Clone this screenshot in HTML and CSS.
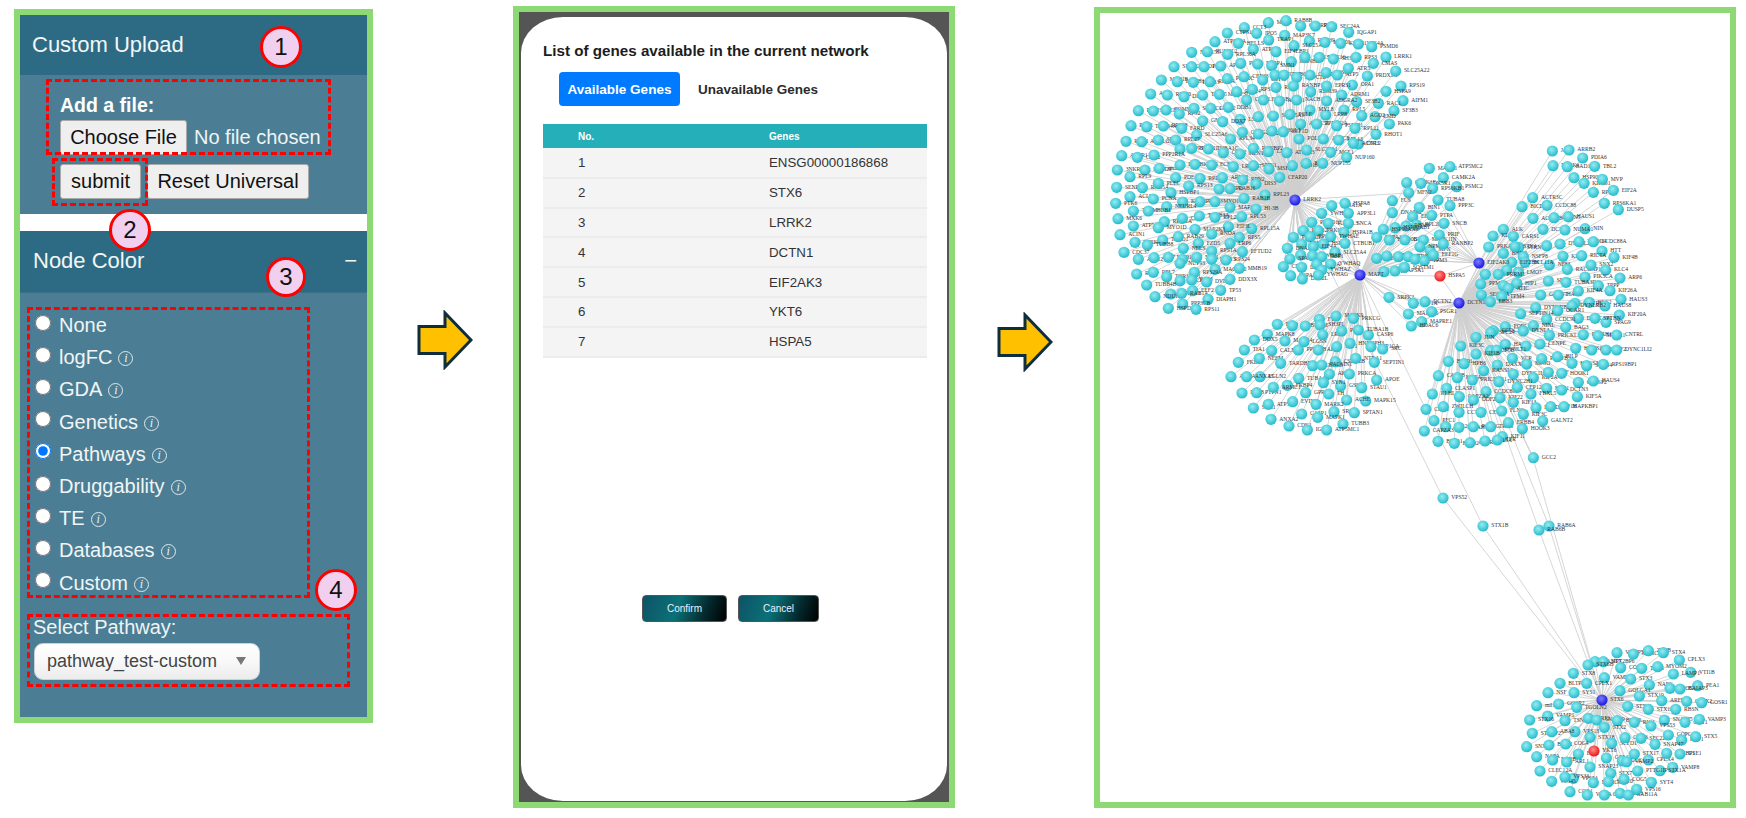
FILE: index.html
```html
<!DOCTYPE html>
<html lang="en">
<head>
<meta charset="utf-8">
<title>Custom upload workflow</title>
<link rel="stylesheet" href="styles.css">
</head>
<body>
<main class="figure">
  <section class="panel panel-upload">
    <h2 class="acc-head">Custom Upload</h2>
    <div class="acc-body upload-body">
      <div class="file-label">Add a file:</div>
      <div class="file-row"><button class="ui-btn choose-btn" type="button">Choose File</button><span class="file-status">No file chosen</span></div>
      <div class="btn-row"><button class="ui-btn submit-btn" type="button">submit</button><button class="ui-btn reset-btn" type="button">Reset Universal</button></div>
    </div>
    <div class="acc-gap"></div>
    <h2 class="acc-head node-head">Node Color<span class="collapse">−</span></h2>
    <div class="acc-body color-body">
      <label class="radio-row"><input type="radio" name="c"><span>None</span></label>
      <label class="radio-row"><input type="radio" name="c"><span>logFC</span><i class="info">i</i></label>
      <label class="radio-row"><input type="radio" name="c"><span>GDA</span><i class="info">i</i></label>
      <label class="radio-row"><input type="radio" name="c"><span>Genetics</span><i class="info">i</i></label>
      <label class="radio-row"><input type="radio" name="c" checked><span>Pathways</span><i class="info">i</i></label>
      <label class="radio-row"><input type="radio" name="c"><span>Druggability</span><i class="info">i</i></label>
      <label class="radio-row"><input type="radio" name="c"><span>TE</span><i class="info">i</i></label>
      <label class="radio-row"><input type="radio" name="c"><span>Databases</span><i class="info">i</i></label>
      <label class="radio-row"><input type="radio" name="c"><span>Custom</span><i class="info">i</i></label>
      <div class="select-label">Select Pathway:</div>
      <div class="fake-select"><span>pathway_test-custom</span><b class="caret"></b></div>
    </div>
    <div class="dash dash-1"></div>
    <div class="dash dash-2"></div>
    <div class="dash dash-3"></div>
    <div class="dash dash-4"></div>
    <div class="badge badge-1">1</div>
    <div class="badge badge-2">2</div>
    <div class="badge badge-3">3</div>
    <div class="badge badge-4">4</div>
  </section>

  <svg class="arrow" viewBox="0 0 56 60"><path d="M2 16.5H28V3L54 30L28 57V43.5H2Z"/></svg>

  <section class="panel panel-modal">
    <div class="modal">
      <h3 class="modal-title">List of genes available in the current network</h3>
      <div class="tabs"><span class="tab tab-on">Available Genes</span><span class="tab">Unavailable Genes</span></div>
      <table class="genes">
        <thead><tr><th class="col-no">No.</th><th>Genes</th></tr></thead>
        <tbody>
          <tr><td>1</td><td>ENSG00000186868</td></tr>
          <tr><td>2</td><td>STX6</td></tr>
          <tr><td>3</td><td>LRRK2</td></tr>
          <tr><td>4</td><td>DCTN1</td></tr>
          <tr><td>5</td><td>EIF2AK3</td></tr>
          <tr><td>6</td><td>YKT6</td></tr>
          <tr><td>7</td><td>HSPA5</td></tr>
        </tbody>
      </table>
      <div class="modal-actions"><button class="grad-btn confirm" type="button">Confirm</button><button class="grad-btn cancel" type="button">Cancel</button></div>
    </div>
  </section>

  <svg class="arrow arrow-2" viewBox="0 0 56 60"><path d="M2 16.5H28V3L54 30L28 57V43.5H2Z"/></svg>

  <section class="panel panel-network">
    <svg id="network" class="network" viewBox="1100 13 630 789" xmlns="http://www.w3.org/2000/svg">
      <defs>
        <radialGradient id="gc" cx=".42" cy=".38" r=".65"><stop offset="0" stop-color="#93edf1"/><stop offset="1" stop-color="#1fb8ca"/></radialGradient>
        <radialGradient id="gb" cx=".42" cy=".38" r=".65"><stop offset="0" stop-color="#7d7dff"/><stop offset="1" stop-color="#1212e0"/></radialGradient>
        <radialGradient id="gr" cx=".42" cy=".38" r=".65"><stop offset="0" stop-color="#ff8f8f"/><stop offset="1" stop-color="#ee0d0d"/></radialGradient>
      </defs>
    </svg>
  </section>
</main>
<script src="network.js"></script>
</body>
</html>
```
FILE: styles.css
```css
* { box-sizing: border-box; }
html, body { margin: 0; height: 100%; background: #fff; overflow: hidden; }
body { font-family: "Liberation Sans", Arial, sans-serif; }

.figure { display: flex; align-items: flex-start; width: 1746px; height: 818px; padding: 6px 0 0 14px; }
.panel { border: 6px solid #8dd974; flex: none; }

/* left panel */
.panel-upload { position: relative; width: 359px; height: 714px; margin-top: 3px; display: flex; flex-direction: column; background: #4b7e94; }
.acc-head { margin: 0; height: 60px; background: #2d6b84; color: #f2f6f7; font-size: 22px; font-weight: 400; display: flex; align-items: center; padding: 0 12px; }
.node-head { height: 62px; padding: 0 10px 3px 13px; justify-content: space-between; box-shadow: inset 0 -1px 0 #3a7088; }
.collapse { font-size: 22px; }
.acc-body { background: #4b7e94; color: #fff; }
.upload-body { height: 139px; padding: 19px 0 0 40px; }
.file-label { font-size: 19.5px; font-weight: 700; line-height: 22px; height: 26px; }
.file-row { display: flex; align-items: center; height: 35px; }
.file-status { font-size: 20px; color: #f0f4f5; margin-left: 7px; }
.btn-row { display: flex; margin-top: 9px; gap: 6px; }
.ui-btn { height: 35px; font: 20px "Liberation Sans", Arial, sans-serif; color: #111; background: #efefef; border: 1px solid #a9a9a9; border-radius: 3px; padding: 0; }
.choose-btn { width: 127px; }
.submit-btn { width: 81px; }
.reset-btn { width: 162px; }
.acc-gap { height: 17px; background: #fff; }
.color-body { flex: 1; padding: 16px 0 0 15px; }
.radio-row { display: flex; align-items: center; height: 32.2px; font-size: 20px; color: #f1f5f6; }
.radio-row input { width: 16px; height: 16px; margin: -5px 8px 0 0; flex: none; accent-color: #0075ff; }
.radio-row span { padding-top: 1px; }
.info { width: 15px; height: 15px; margin: 3px 0 0 6px; border: 1px solid #dfe8ea; border-radius: 50%; font: italic 12px/13px "Liberation Serif", serif; color: #eef3f4; text-align: center; }
.select-label { margin: 17px 0 0 -2px; font-size: 20px; line-height: 23px; color: #f0f4f5; }
.fake-select { display: flex; align-items: center; justify-content: space-between; width: 226px; height: 37px; margin: 4px 0 0 -1px; padding: 0 13px 0 12px; background: linear-gradient(#ffffff, #f8f8f8 50%, #ececec); border: 1px solid #c9d2d6; border-radius: 9px; font-size: 18px; color: #444; }
.caret { width: 0; height: 0; border: 5px solid transparent; border-top: 8px solid #777; border-bottom: 0; }

.dash { position: absolute; border: 3px dashed #f00; pointer-events: none; }
.dash-1 { left: 26px; top: 64px; width: 285px; height: 76px; }
.dash-2 { left: 32px; top: 143px; width: 96px; height: 48px; }
.dash-3 { left: 7px; top: 292px; width: 283px; height: 291px; }
.dash-4 { left: 7px; top: 599px; width: 323px; height: 73px; }
.badge { position: absolute; width: 42px; height: 42px; border: 3.5px solid #f00; border-radius: 50%; background: #f0d0ee; color: #111; font-size: 24px; display: flex; align-items: center; justify-content: center; }
.badge-1 { left: 240px; top: 11px; }
.badge-2 { left: 89px; top: 194px; }
.badge-3 { left: 246px; top: 242px; width: 40px; height: 40px; }
.badge-4 { left: 295px; top: 554px; }

/* arrows */
.arrow { flex: none; width: 56px; height: 60px; margin: 304px 40px 0 44px; }
.arrow path { fill: #ffc000; stroke: #0f2e3d; stroke-width: 3; }
.arrow-2 { margin: 306px 41px 0 42px; }

/* modal panel */
.panel-modal { width: 442px; height: 802px; background: #555; padding: 5px 2px 1px 2px; }
.modal { height: 100%; background: #fff; border-radius: 42px 42px 42px 42px / 36px 36px 36px 36px; padding: 25px 22px 0 22px; display: flex; flex-direction: column; }
.modal-title { margin: 0; font-size: 15.2px; line-height: 18px; font-weight: 700; color: #1d1d1d; }
.tabs { display: flex; align-items: center; margin: 12px 0 18px 16px; gap: 18px; }
.tab { font-size: 13.5px; font-weight: 700; color: #2b2b2b; }
.tab-on { display: flex; align-items: center; justify-content: center; width: 121px; height: 34px; color: #fff; background: #007bff; border-radius: 4px; }
.genes { width: 384px; border-collapse: collapse; table-layout: fixed; }
.genes th { height: 24px; padding: 0 0 0 35px; background: #25b0b9; color: #fff; font-size: 10px; text-align: left; }
.genes .col-no { width: 191px; }
.genes td { height: 29.8px; padding: 0 0 0 35px; background: #f4f4f4; border-bottom: 2px solid #ececec; font-size: 13.3px; color: #333; }
.modal-actions { display: flex; gap: 11px; margin: 237px 0 0 99px; }
.grad-btn { height: 27px; padding: 0; border: 1px solid #555; border-radius: 4px; color: #eef; font: 10px "Liberation Sans", Arial, sans-serif; background: linear-gradient(110deg, #0d5366 0%, #0b7177 42%, #04282c 75%, #000 100%); }
.confirm { width: 85px; }
.cancel { width: 81px; }

/* network panel */
.panel-network { width: 642px; height: 801px; margin-top: 1px; background: #fff; }
.network { display: block; width: 630px; height: 789px; }
.network line { stroke: #cfcfcf; stroke-width: .85; }
.network text { font: 5.6px "Liberation Serif", serif; fill: #333; dominant-baseline: middle; }
```
FILE: network.js
```js
// Force-layout snapshot: positions are listed per region, in 3x units relative to an origin.
const NS = "http://www.w3.org/2000/svg";
const svg = document.getElementById("network");
const HUB = {
  LRRK2: [1295, 200], MAPT: [1360, 275], EIF2AK3: [1479, 263], DCTN1: [1459, 303], STX6: [1602, 700]
};
const GROUPS = [
 { o: [1090, 0], hubs: ["LRRK2"], d: `535,68,MYL6 588,62,RAB8B 632,78,CHERP 676,78,RPN1 725,80,SEC24A 776,97,IQGAP1 463,83,CCT3 412,99,CTPS1 500,100,IPO5 375,125,ATP5F1A 584,106,MAP3K7 536,120,TRAP1 445,130,HELLS 658,123,RAB39 612,137,SLC25A10 305,157,NUP155 352,155,RUVBL2 490,148,ATP1P0 558,155,EIF4EBP1 413,163,RPL36A 705,127,KIF20L 752,130,KPNB1 805,132,VPS4A 845,140,PSMD6 888,171,LRRK1 604,185,LMNB2 645,172,SPB13 688,172,DHX16 730,177,SH3GL1 798,172,RPS3 850,190,CMAS 252,200,SH3BGL 305,200,AGO1 342,200,PKN4 392,198,AP3B1 452,190,PPKP 503,192,NSBP1 545,197,SMN1 214,240,MAP1B 262,245,LAMB1 310,247,TUBB3 360,245,RPS6A 412,236,PRKDC 462,230,CENJ3 518,240,GTF3I 555,225,PTCD3 582,225,HSBGF 620,232,ARPC1B 660,225,CRAT 708,218,PCSK5 742,225,ATP5 775,205,ATR5 787,255,OPA1 832,228,PRDX1A 917,213,SLC25A22 933,258,RPS19 888,274,HSPA9 939,302,AIFM1 912,332,SF3B3 865,310,RAC1 855,350,EMD 898,372,PAK6 858,403,RHOT1 805,432,DVL2 182,282,APC 232,285,RPS20 282,290,DFFA 338,285,TCF25 388,283,MTHFSD 440,275,RPL24 487,268,RPS16 558,262,RAN1 610,258,RANBP1 662,275,RBM39 710,258,EPRS1 755,285,ADRM1 800,305,SF3B2 145,332,PLPP3 190,333,ABCE1 228,330,TOMM20 268,342,RPS2 312,325,SPTLC1 362,325,GFPT2 415,322,DDB1 470,300,CSE1L 520,300,FARSB 568,303,ACSL1 620,300,NACB1 710,303,ADGRA2 762,330,RPL5 707,345,LRP8 660,330,MYL8 815,347,AGO2 450,358,LSR 505,350,OAK 550,348,SLC25A3 600,343,POLE 338,363,GNAI2 398,365,DDX7 123,377,PHB1 170,380,TUBB4A 220,378,RPL18 275,385,FARD 632,372,ARPC5L 680,372,PPP2R2A 740,377,PSMD1 795,385,RPL11 320,405,SLC25A6 422,417,RPL34 457,397,COPG2 505,402,RPS27 546,393,SH3GL3 580,395,EEF1D 627,417,POLD1 700,417,ARPC5 746,420,RPL13 790,430,ACTR3 108,424,RAB1 155,425,AOOLGA2 205,420,SER4 257,420,RPL27 270,447,PTPRK 305,445,SYON1 355,447,TUBA1C 400,458,CDK2 450,462,MEN1 490,445,RANBP2 535,455,LASP1 590,458,ATP5A3 650,450,SLC25A1 722,457,MCL1 770,472,NUP160 95,467,ACTR1 142,472,CHD2 192,465,PPP2R1A 82,510,3NKRF 165,510,PSMD9 208,505,small 270,495,PYGB 315,493,KOB3 365,495,ECHS1 430,500,LRRC47 490,497,SPIN1 537,507,MSH2 607,497,RAB18 648,490,BTF3 698,490,NUP155 120,530,RPL9 257,533,PDE4A 330,535,RPL12 397,533,ARPC2 458,540,RPN2 498,552,DIS3 569,532,CFAP20 80,562,SENP1 157,563,RAB5A 205,550,PLEC 243,578,HSPBP1 296,558,RPS13 387,567,TMPO 420,566,RAB16 525,585,RPL23 120,590,ACLY 190,597,PCNA 77,610,PTK6 278,606,KHSRP 330,605,RAG3 375,605,MYO1C 462,595,RAB1B 230,620,NEURL4 420,622,MAP2K4 498,627,HI-3B 130,633,TUFM 175,633,BUB1 84,656,MXK6 130,678,ATP5A1 223,665,RPS11A 277,655,CNP 328,648,TUBB3A 375,652,RPL2 455,650,RPL53 485,686,RPL15A 415,680,EIF3L 205,683,MYO1D 315,688,MAP2K3 365,702,RNOA 448,712,RPS5 90,704,ACIN1 135,727,PARK7 218,720,TNPO1 265,710,RAB29 172,735,TUBB8 325,730,FZD5 420,730,LRP6 102,757,CDC37 280,745,NELS 365,753,RPS1A 457,755,EFTUD2` },
 { o: [1100, 220], hubs: ["LRRK2"], d: `115,118,ATG12 162,113,ATP7 205,112,MTO1 248,118,ABP 240,130,NUP93 290,112,NRP1 335,118,RPS13 378,120,RPS24 345,148,MAGED2 418,145,MMB19 110,162,RPL1 160,157,RPL7 200,170,TOR1AIP1 283,157,RPS29A 240,182,RACK1 275,180,RPS3 320,186,DVL3 390,178,DDX3X 140,195,TUBB4B 212,222,NDUFV1 165,230,NDUFA2 278,212,EEF2 362,211,TP53 245,220,RAB1A 324,238,DIAPH1 248,252,PPP3CB 205,265,HSPD1 288,268,RPS11` },
 { o: [1280, 190], hubs: ["LRRK2"], second: 120, d: `155,47,TUBA1A 195,40,HSPA8 125,70,YWHAE 205,70,APP3L1 95,97,PSMD12 145,100,TUBAL3 205,100,SNCA 70,122,RPL12 115,122,PRKCA 192,127,HSPA1B 40,142,PRKAG1 90,140,RPS10 152,140,TWHAE 65,162,EEF1A1 130,162,HSPA2 195,160,CTBUB1 22,175,DNAJA1 100,170,EIF4A 165,187,SLC25A4 62,195,SP1 30,207,SPA 97,197,YWHAB 125,200,DCP1 10,230,CDK5 65,232,DENK 110,223,PSMA 152,222,YWHAQ 125,240,YWHAZ 32,257,HSPA4 67,267,DAS2L 115,255,YWHAG` },
 { o: [1280, 190], hubs: ["MAPT"], second: 400, d: `337,32,FUS 337,68,DNAJA2 418,52,BIN1 474,30,TUBA8 510,47,PPP3C 398,80,EIF3D 455,76,PTPA 410,105,RPL28 492,100,SNCB 378,108,RBM8 345,113,HSP90AB1 310,118,HSP90AA1 290,142,HSPA1A 328,150,HSP90B 375,150,GRSF 430,150,MAPK1IN 478,135,PRIF 450,180,MFN 420,170,NPM1 490,162,RANBP2 290,205,KIF1AP 320,198,TUBB 355,200,DYNC 385,200,KRBB 405,208,TPD52 433,212,TPM3 460,195,EEF1G 312,245,ACTB 345,243,RAPSA1 373,232,SQSTM1` },
 { o: [1240, 140], hubs: ["MAPT"], d: `568,85,MARK1 630,80,ATP5MC2 610,113,CAMK2A 650,140,PSMC2 500,128,CSNK1E 543,130,CDK5R1 578,145,RPS6KB1 506,158,MFN2` },
 { o: [1240, 140], hubs: ["MAPT", "DCTN1"], d: `447,472,SRPK2 520,490,KIF1A 555,485,DCTN2 505,522,MAP3K5 575,515,PSGR1 545,545,MAPRE1 514,558,HDAC6` },
 { o: [1240, 140], hubs: ["DCTN1"], d: `937,33,JAK1 987,30,ARRB2 939,77,FOXK1 982,80,BAD1 1028,54,PDIA6 1064,79,TBL2 1002,113,HSP90B1 1032,130,KIF5B1 1087,118,MVP 1060,157,RPN2 1120,151,EIF2A 878,173,ACTR3C 846,200,BICD2 921,196,CCDC88 1093,190,RPS6KA1 1135,209,DUSP5 879,235,ACTR1B 942,233,DCTN5 985,230,HAUS1 909,268,DCTN6 1035,266,NIN 975,270,NUMA1 790,268,ALK 759,288,KLC1 820,289,CARS1 746,321,PRKAR1A 920,317,KLC 836,322,STRN 960,312,DYNLL2 1017,305,TMOD4 1060,305,CCDC88A 790,340,BNIP3 825,320,STK4 850,350,NSFP8 1086,333,HTT 969,349,KIF3B 1025,347,RICTA 1122,352,KIF4B 928,375,NF83 855,367,BCL11A 815,367,EIF2BH 982,388,RACGAP1 1053,375,SNX2 1097,390,KLC4 800,390,PNI 835,397,LMO7 736,403,VCL 775,403,PRRM1 1035,411,PIK3CA 1140,414,ARP6 722,432,PPM1B 790,437,DCP 830,430,HIP1 925,423,SNX3 978,427,TUBA3D 1075,437,TPPP 1110,452,KIF26A 805,445,ATIC 724,465,SEC31A 785,470,TPM4 902,465,GALNT 955,465,HAUS 1015,453,KIF4A 751,485,EBB3 1143,478,HAUS3 1005,490,BMERB1 1048,487,KLC2 1095,498,HAUS8 887,503,DYNLRB1 996,497,DYNLRB2 953,512,OCAR1 842,521,SEPTIN14 1138,525,KIF20A 1015,535,DYNC1H1 920,538,CCDC91 1098,547,SPAG9 1065,535,SPTBN 796,560,FOPI 880,557,NINL 977,562,BAG3 760,572,CCDC120 850,573,DYNLL1 752,578,SPC24 928,586,PRICKLE2 1030,584,PAFAH1B1 1074,587,MYTR1 1130,585,CNTRL 708,592,JUN 662,618,KIF3C 796,613,HAUS 858,618,DISC1 900,612,CENPE 1007,625,HAUS2 752,632,KIF5B 770,630,DYNLT1 1055,630,DCTN4 1098,630,KIF2 1130,630,DYNC1LI2 708,642,KIF1B 625,664,BICD1 672,671,HPB6 772,675,DAXX 817,655,VCP 860,672,MPSO 905,656,PDGFB 952,650,BILP 996,670,HAUS3 1040,677,STRN4 1090,673,RPS19BP1 731,692,KANSL9 595,707,CAPZB 652,713,KIF5A 697,720,PRICKLE1 820,702,DYNC1LI1 880,713,KIF2A 925,697,CTIF 965,700,HOOK1 1015,727,CLASP2 1060,723,HAUS4 777,725,DYNC2H1 620,745,CLASP1 738,755,CCDC88C 832,742,CEP126 920,745,HAP1 965,750,DCTN3 577,762,KLHL2 658,770,CAPZA2 780,773,KIF22 873,762,FBXL5 1012,770,KIF5A 700,780,ODF2 820,787,KIF13 558,808,CLIP1 610,800,ZWILCH 888,803,BTBD3 932,800,HAP1B 972,800,MAPKBP1 657,817,CCT4 723,817,CEP70 785,813,FLNC 850,823,KIF3C 582,842,PFC1 908,843,GALNT2 617,860,PAK2 657,862,PAFAH 700,860,PACRG 752,860,TRIM 805,848,ERBB4 847,866,HOOK3 553,873,CAPZA3 787,890,KIF11 594,904,BICD1 643,910,BICD2 690,908,ACTR1A 735,903,KIF15A 772,900,TPR 880,953,GCC2` },
 { o: [1220, 300], hubs: ["MAPT"], d: `172,73,PFID 217,77,SPTB 256,78,TRIM 298,58,FYN 348,48,MAPK9 400,55,PRKCG 300,75,SH3PL 142,103,MAPK8 103,120,DDX5 195,123,MAPK4 252,125,LGSN 308,104,LRP1 365,93,PIN1 445,105,CASP6 415,90,TUBA1B 73,150,TIA1 155,152,CALM1 235,150,PPP2CB 295,150,ABI1 350,140,SPT1 390,130,HNRNPH3 453,140,PPP1CA 488,147,SRC 55,187,FKBP5 118,175,NEFM 182,190,TARDBP 278,197,RUBB2B 346,185,CSNK2B 407,175,NTRA1 463,187,SEPTIN1 33,230,ANXA1 120,230,EGLN2 80,230,ANXA5 236,235,TUBA4A 328,222,AKT1 202,256,FKBP4 305,195,PACSIN1 388,222,PRKCA 362,258,GSK3A 425,263,STAU1 470,240,APOE 310,248,SYN1 66,279,P4HB 110,278,PTPN1 160,262,ARMC1 257,278,GPR6A 326,282,TH 437,303,MAPK15 380,300,ACHE 100,324,SGK1 145,313,ATP5MF 218,305,EVI5R 288,313,MARK2 245,342,CASP1 342,335,SRP14 403,338,SPTAN1 153,358,ANXA2 293,352,MAPK1 207,378,CDK1 262,390,IGLL5 369,372,TUBB3 320,390,ATP5MC1` },
 { o: [1480, 630], hubs: ["STX6"], d: `411,68,VAMP5 460,72,MARCH3 505,62,ZBTB 550,68,STX4 345,95,VAMP7 370,95,STX2BP6 324,105,STX6B 422,113,COG2 485,115,TMF1 533,110,MYOM2 598,90,CPLX3 632,127,VTI1B 580,132,LAMP1 280,130,STX8 373,143,VAMP4 452,147,STX3 508,165,NAPG 240,160,BLTP3B 320,160,CPLX1 570,175,SCOG7 653,167,PEA1 600,177,BAIAP3 204,188,NSF 282,188,SYS1 420,182,GOLGA1 478,198,STX19 545,212,ARFRP1 620,214,CPLX2 665,218,GOSR1 170,227,mil1 236,222,GOSR2 290,232,TGOLN2 443,229,STX11 505,238,STX12 587,238,RBSN 203,258,VAMP1 149,270,STX16 255,272,TSNARE1 325,265,ARF1 350,270,SNAP29 412,272,BET1L 463,277,RIC1 553,270,SNAP25 513,288,VPS53 615,277,GOT1 658,268,VAMP3 373,292,STX2 285,305,VPS13 157,310,STXBP2 215,305,ABA8 330,322,STX18 395,340,SCFD1 435,323,COG6 483,325,SEC22B 565,315,GOPC 605,330,RGP1 647,320,STX5 140,350,SNX4 207,345,BNIP1 257,342,COG4 295,372,ESP1 525,343,SNAP47 170,380,NAPA 218,390,NAPB 260,396,ARL1 379,384,GOLGA4 427,393,GCC1 463,372,STX17 505,390,CPLX4 440,395,VAMP2 560,370,STXBP1 600,372,USE1 180,423,CLEC12A 330,411,SNAP23 578,412,VAMP8 540,422,STX1A 473,423,PTTG1IP 392,430,STX7 280,445,VPS54 215,454,VPS45 255,441,VPS33 340,458,MARCHF1 385,455,STX10 432,448,COG5 514,457,SYT4 270,485,COG1 322,495,VTI1A 373,495,COG8 420,490,COG3 445,495,RAB11A 470,478,VPS16` }
];
const SPECIAL = [
  { p: [1440, 276], n: "HSPA5", hubs: ["MAPT", "EIF2AK3", "DCTN1"], red: true },
  { p: [1594, 751], n: "YKT6", hubs: ["STX6"], red: true },
  { p: [1443, 498], n: "VPS52", hubs: ["LRRK2", "STX6"] },
  { p: [1483, 526], n: "STX1B", hubs: ["MAPT", "STX6"] },
  { p: [1549, 526], n: "RAB6A", hubs: ["DCTN1", "STX6"] },
  { p: [1539, 530], n: "RAB6B", hubs: ["DCTN1", "STX6"] }
];
const EXTRA = [["LRRK2", [1408, 193]], ["DCTN1", [1533, 458]], ["STX6", [1533, 458]]];

function el(tag, attrs) {
  const e = document.createElementNS(NS, tag);
  for (const k in attrs) e.setAttribute(k, attrs[k]);
  return e;
}
const edges = document.createDocumentFragment();
const nodes = document.createDocumentFragment();
const link = (a, b) => edges.append(el("line", { x1: a[0], y1: a[1], x2: b[0], y2: b[1] }));
function node(p, name, fill, r) {
  nodes.append(el("circle", { cx: p[0], cy: p[1], r: r, fill: fill }));
  const t = el("text", { x: p[0] + 8.3, y: p[1] });
  t.textContent = name;
  nodes.append(t);
}
for (const g of GROUPS) {
  for (const item of g.d.split(/\s+/)) {
    const [x, y, name] = item.split(",");
    const p = [g.o[0] + x / 3, g.o[1] + y / 3];
    link(p, HUB[g.hubs[0]]);
    if (g.hubs[1]) link(p, HUB[g.hubs[1]]);
    if (g.second !== undefined && +x >= g.second) link(p, HUB[g.hubs[0] === "LRRK2" ? "MAPT" : "EIF2AK3"]);
    node(p, name, "url(#gc)", 5.6);
  }
}
for (const s of SPECIAL) {
  s.hubs.forEach(h => link(s.p, HUB[h]));
  node(s.p, s.n, s.red ? "url(#gr)" : "url(#gc)", 5.6);
}
EXTRA.forEach(([h, p]) => link(p, HUB[h]));
for (const h in HUB) node(HUB[h], h, "url(#gb)", 5.6);
svg.append(edges, nodes);
```
